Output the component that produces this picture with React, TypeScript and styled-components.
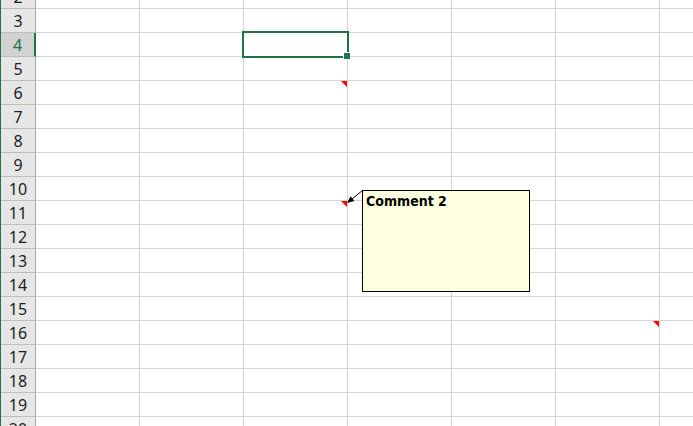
import React from "react";
import styled, { createGlobalStyle } from "styled-components";

const GlobalStyle = createGlobalStyle`
  html, body { margin: 0; padding: 0; background: #ffffff; overflow: hidden; }
  #root { width: 100vw; height: 100vh; }
`;

const GREEN = "#217346";
const GRID = "#d4d4d4";

const Viewport = styled.div`
  position: relative;
  width: 100%;
  height: 100%;
  overflow: hidden;
  box-sizing: border-box;
  border-left: 1px solid ${GREEN};
  background: #fff;
`;

const Sheet = styled.div`
  display: flex;
  flex-direction: column;
  margin-top: -15px;
`;

const Row = styled.div`
  display: flex;
  height: 24px;
  flex: none;
`;

const RowHeader = styled.div<{ $active?: boolean }>`
  flex: none;
  width: 35px;
  height: 24px;
  box-sizing: border-box;
  display: flex;
  align-items: center;
  justify-content: center;
  padding-top: 1px;
  background: ${(p) => (p.$active ? "#d2d2d2" : "#e6e6e6")};
  border-bottom: 1px solid #bdbdbd;
  border-right: ${(p) => (p.$active ? `2px solid ${GREEN}` : "1px solid #ababab")};
  color: ${(p) => (p.$active ? GREEN : "#1e1e1e")};
  font-family: "Noto Sans", "Open Sans", sans-serif;
  font-size: 16px;
`;

const Cell = styled.div`
  position: relative;
  flex: none;
  width: 104px;
  height: 24px;
  box-sizing: border-box;
  border-right: 1px solid ${GRID};
  border-bottom: 1px solid ${GRID};
`;

const CommentMark = styled.span`
  position: absolute;
  top: 0;
  right: 0;
  width: 0;
  height: 0;
  border-top: 6px solid #ff0000;
  border-left: 6px solid transparent;
`;

const Selection = styled.div`
  position: absolute;
  left: -2px;
  top: -2px;
  width: 107px;
  height: 27px;
  box-sizing: border-box;
  border: 2px solid ${GREEN};
  pointer-events: none;
  z-index: 2;
`;

const FillHandle = styled.span`
  position: absolute;
  right: -3px;
  bottom: -3px;
  width: 6px;
  height: 6px;
  background: ${GREEN};
  outline: 1px solid #ffffff;
`;

const CommentBox = styled.div`
  position: absolute;
  left: 361px;
  top: 190px;
  width: 168px;
  height: 102px;
  box-sizing: border-box;
  background: #ffffe1;
  border: 1px solid #000000;
  padding: 2px 0 0 3px;
  font-family: "DejaVu Sans Condensed", "DejaVu Sans", Verdana, sans-serif;
  font-stretch: condensed;
  font-weight: bold;
  font-size: 14px;
  line-height: 16px;
  color: #000;
  z-index: 3;
`;

const Leader = styled.svg`
  position: absolute;
  left: 339px;
  top: 185px;
  width: 30px;
  height: 25px;
  z-index: 4;
  overflow: visible;
`;

const COLS = ["A", "B", "C", "D", "E", "F", "G"];
const ROWS = Array.from({ length: 19 }, (_, i) => i + 2);

const comments: Record<string, boolean> = { C6: true, C11: true, F16: true };

export default function App() {
  return (
    <>
      <GlobalStyle />
      <Viewport>
        <Sheet>
          {ROWS.map((r) => (
            <Row key={r}>
              <RowHeader $active={r === 4}>{r}</RowHeader>
              {COLS.map((c) => {
                const id = `${c}${r}`;
                return (
                  <Cell key={id}>
                    {comments[id] && <CommentMark />}
                    {id === "C4" && (
                      <Selection>
                        <FillHandle />
                      </Selection>
                    )}
                  </Cell>
                );
              })}
            </Row>
          ))}
        </Sheet>
        <Leader viewBox="0 0 30 25">
          <line x1="23" y1="5" x2="12" y2="14" stroke="#000" strokeWidth="1" />
          <polygon points="7,18 14.3,15.9 10.6,11.2" fill="#000" />
        </Leader>
        <CommentBox>Comment 2</CommentBox>
      </Viewport>
    </>
  );
}
